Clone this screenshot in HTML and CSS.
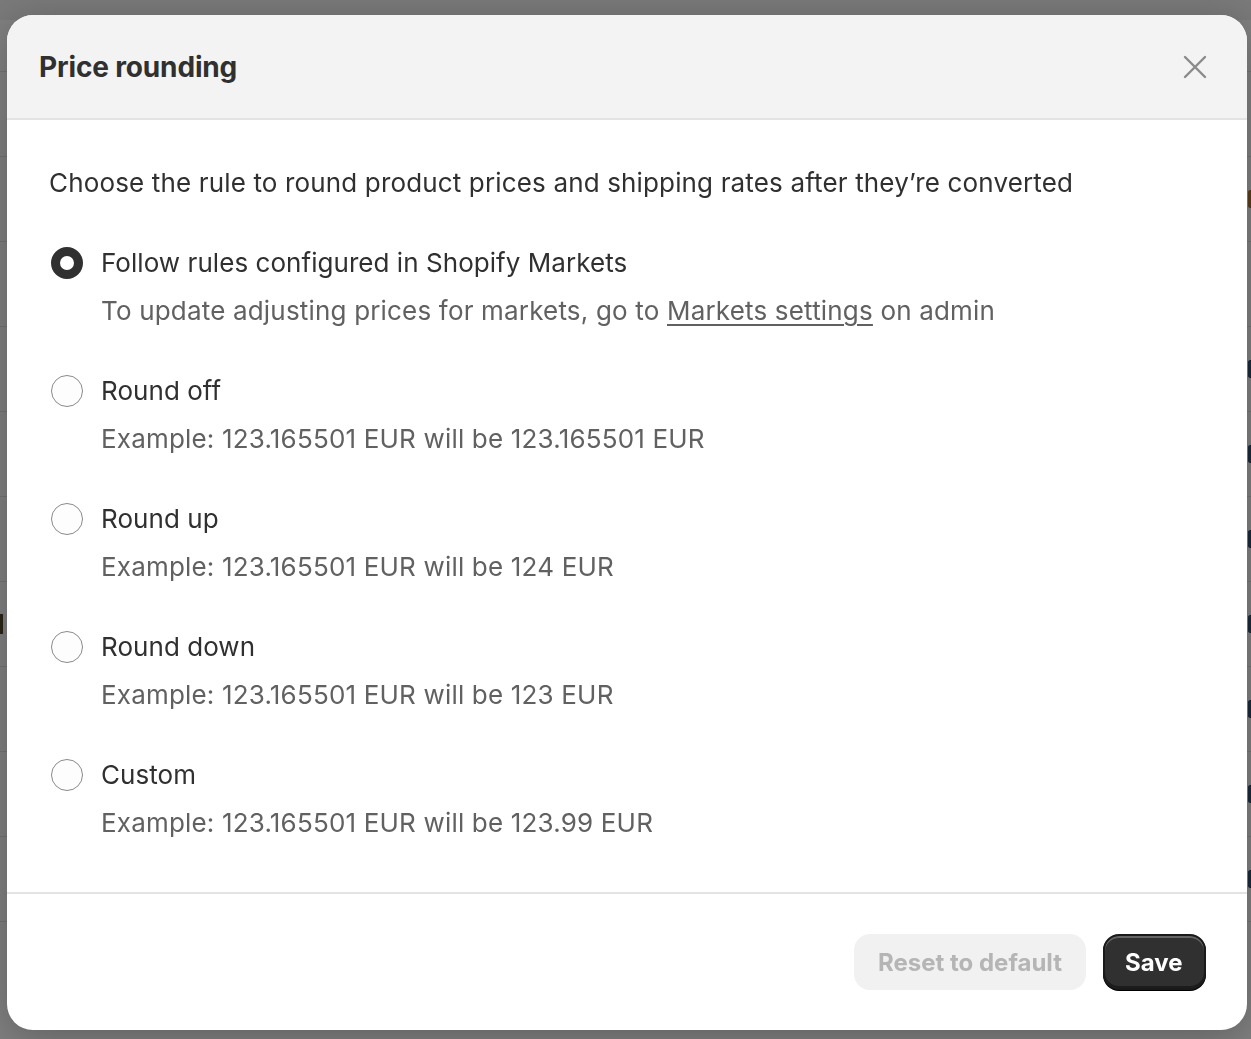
FILE: index.html
```html
<!DOCTYPE html>
<html lang="en">
<head>
<meta charset="utf-8">
<title>Price rounding</title>
<link rel="stylesheet" href="styles.css">
</head>
<body>
<div class="page">
  <div class="page-row"></div>
  <div class="page-row"></div>
  <div class="page-row"><span class="frag frag-brown"></span></div>
  <div class="page-row"></div>
  <div class="page-row"><span class="frag"></span></div>
  <div class="page-row"><span class="frag"></span></div>
  <div class="page-row"><span class="frag"></span></div>
  <div class="page-row"><span class="frag-left"></span><span class="frag"></span></div>
  <div class="page-row"><span class="frag"></span></div>
  <div class="page-row"><span class="frag"></span></div>
  <div class="page-row"><span class="frag"></span></div>
  <div class="page-row last"><span class="badge"></span></div>
</div>

<div class="modal">
  <header class="modal-header">
    <h2 class="modal-title">Price rounding</h2>
    <button class="close-btn" aria-label="Close">
      <svg width="24" height="24" viewBox="0 0 24 24" fill="none" stroke="#8a8a8a" stroke-width="2.4" stroke-linecap="round"><path d="M2 2 L22 22 M22 2 L2 22"/></svg>
    </button>
  </header>

  <section class="modal-body">
    <p class="intro">Choose the rule to round product prices and shipping rates after they’re converted</p>
    <div class="options">
      <label class="option">
        <span class="radio checked"></span>
        <span class="option-text">
          <span class="option-label">Follow rules configured in Shopify Markets</span>
          <span class="option-desc">To update adjusting prices for markets, go to <a class="link" href="#">Markets settings</a> on admin</span>
        </span>
      </label>
      <label class="option">
        <span class="radio"></span>
        <span class="option-text">
          <span class="option-label">Round off</span>
          <span class="option-desc">Example: 123.165501 EUR will be 123.165501 EUR</span>
        </span>
      </label>
      <label class="option">
        <span class="radio"></span>
        <span class="option-text">
          <span class="option-label">Round up</span>
          <span class="option-desc">Example: 123.165501 EUR will be 124 EUR</span>
        </span>
      </label>
      <label class="option">
        <span class="radio"></span>
        <span class="option-text">
          <span class="option-label">Round down</span>
          <span class="option-desc">Example: 123.165501 EUR will be 123 EUR</span>
        </span>
      </label>
      <label class="option">
        <span class="radio"></span>
        <span class="option-text">
          <span class="option-label">Custom</span>
          <span class="option-desc">Example: 123.165501 EUR will be 123.99 EUR</span>
        </span>
      </label>
    </div>
  </section>

  <footer class="modal-footer">
    <button class="btn btn-disabled">Reset to default</button>
    <button class="btn btn-primary">Save</button>
  </footer>
</div>
</body>
</html>
```

FILE: styles.css
```css
* { box-sizing: border-box; }

html, body {
  margin: 0;
  padding: 0;
  height: 100%;
  overflow: hidden;
}

body {
  background: #7f7f7f;
  font-family: Inter, "Noto Sans", "Liberation Sans", sans-serif;
  color: #303030;
}

.page {
  display: flex;
  flex-direction: column;
  padding-top: 20px;
  background: linear-gradient(#7a7a7a 0 20px, #808080 20px);
  height: 100%;
}

.page-row {
  height: 85px;
  flex: none;
  border-bottom: 1px solid #737373;
  display: flex;
  align-items: center;
  justify-content: space-between;
}

.page-row:first-child { height: 52px; }
.page-row.last { border-bottom: none; align-items: flex-end; }

.frag {
  margin-left: auto;
  width: 3px;
  height: 18px;
  border: 3px solid #1d2a3a;
  border-right: none;
  border-radius: 8px 0 0 8px;
}
.frag-brown { border-color: #5a3e1f; }
.frag-left {
  width: 3px;
  height: 20px;
  background: #2a2418;
}

.badge {
  margin-left: 510px;
  width: 170px;
  height: 10px;
  background: #4d6a55;
  border-radius: 14px 14px 0 0;
}

.modal {
  position: fixed;
  left: 7px;
  top: 15px;
  width: 1240px;
  height: 1015px;
  background: #fff;
  border-radius: 26px;
  overflow: hidden;
  display: flex;
  flex-direction: column;
  box-shadow: 0 8px 40px rgba(0,0,0,0.25);
}

.modal-header {
  flex: none;
  height: 105px;
  background: #f3f3f3;
  border-bottom: 2px solid #e3e3e3;
  display: flex;
  align-items: center;
  justify-content: space-between;
  padding: 0 38px 0 32px;
}

.modal-title {
  margin: 0;
  font-size: 28px;
  font-weight: 680;
  color: #303030;
  letter-spacing: -0.15px;
}

.close-btn {
  background: none;
  border: none;
  padding: 0;
  width: 28px;
  height: 28px;
  display: flex;
  align-items: center;
  justify-content: center;
  cursor: pointer;
}

.modal-body {
  flex: 1;
  padding: 43px 42px 0 42px;
  border-bottom: 2px solid #e3e3e3;
}

.intro {
  margin: 0 0 40px 0;
  font-size: 26px;
  line-height: 40px;
  color: #303030;
  letter-spacing: 0.15px;
}

.options {
  display: flex;
  flex-direction: column;
  gap: 40px;
}

.option {
  display: flex;
  align-items: flex-start;
  gap: 18px;
}

.radio {
  flex: none;
  width: 32px;
  height: 32px;
  margin-top: 4px;
  margin-left: 2px;
  border-radius: 50%;
  border: 1.5px solid #8a8a8a;
  background: #fdfdfd;
}

.radio.checked {
  border: 9px solid #303030;
  background: #fff;
}

.option-text {
  display: flex;
  flex-direction: column;
  gap: 8px;
}

.option-label {
  font-size: 26px;
  line-height: 40px;
  color: #303030;
  letter-spacing: 0.05px;
}

.option-desc {
  font-size: 26px;
  line-height: 40px;
  color: #616161;
  letter-spacing: 0.18px;
}

.link {
  color: #616161;
  text-decoration: underline;
  text-underline-offset: 4px;
  text-decoration-thickness: 2px;
}

.modal-footer {
  flex: none;
  height: 136px;
  display: flex;
  align-items: center;
  justify-content: flex-end;
  gap: 17px;
  padding: 0 41px;
}

.btn {
  height: 56px;
  border-radius: 16px;
  font-family: Inter, "Noto Sans", "Liberation Sans", sans-serif;
  font-size: 24px;
  font-weight: 650;
  padding: 0 20px;
  cursor: pointer;
}

.btn-disabled {
  width: 232px;
  background: #f1f1f1;
  color: #b5b5b5;
  border: none;
}

.btn-primary {
  width: 103px;
  background: #303030;
  color: #fff;
  border: 2px solid #1a1a1a;
  padding-right: 24px;
  box-shadow: inset 0 2px 0 rgba(255,255,255,0.25), inset 0 -2px 0 rgba(0,0,0,0.4), 0 1px 0 #000;
}
```
